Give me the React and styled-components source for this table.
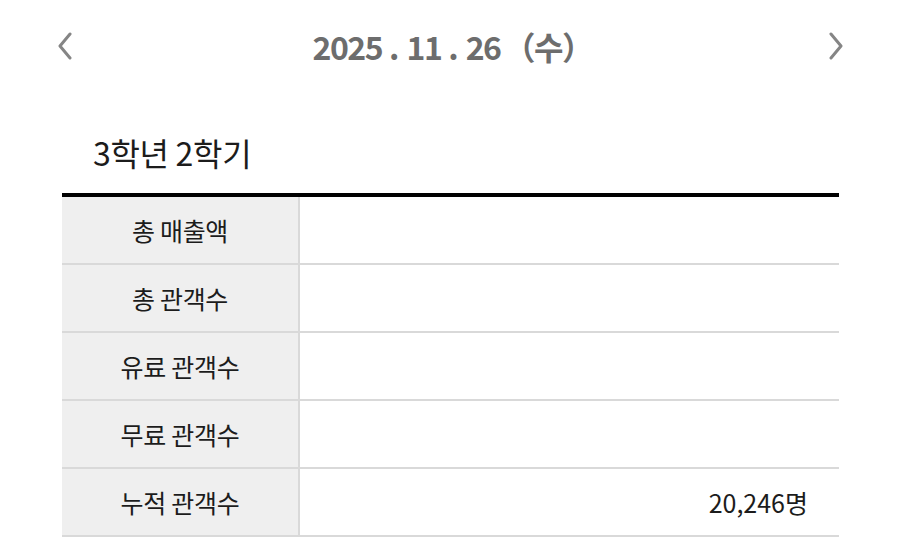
import React from 'react';
import styled, { createGlobalStyle } from 'styled-components';

const GlobalStyle = createGlobalStyle`
  body {
    margin: 0;
    background: #fff;
    font-family: "Noto Sans CJK KR", "Noto Sans", sans-serif;
  }
`;

const Page = styled.div`
  width: 900px;
  height: 544px;
  overflow: hidden;
`;

const DateBar = styled.div`
  display: flex;
  align-items: center;
  justify-content: space-between;
  height: 92px;
  padding: 0 54px 0 55px;
  box-sizing: border-box;
`;

const Arrow = styled.button`
  display: flex;
  align-items: center;
  justify-content: center;
  width: 20px;
  height: 30px;
  padding: 0;
  border: 0;
  background: none;
  color: #858585;
`;

const DateText = styled.h2`
  display: flex;
  align-items: center;
  gap: 7px;
  margin: 0;
  font-size: 32px;
  font-weight: 700;
  letter-spacing: -1.5px;
  color: #6d6d6d;
  padding-left: 4px;
`;

const Dot = styled.span`
  letter-spacing: 0;
`;

const Day = styled.span`
  margin-left: -4px;
`;

const Title = styled.h3`
  margin: 0;
  padding: 39px 0 20px 93px;
  line-height: 42px;
  font-size: 32px;
  font-weight: 400;
  letter-spacing: -0.3px;
  color: #1c1c1c;
`;

const Table = styled.div`
  margin: 0 61px 0 62px;
  border-top: 4px solid #000;
`;

const Row = styled.div`
  display: grid;
  grid-template-columns: 238px 1fr;
  height: 68px;
  border-bottom: 2px solid #d9d9d9;
  box-sizing: border-box;
`;

const Label = styled.div`
  display: flex;
  align-items: center;
  justify-content: center;
  background: #efefef;
  border-right: 2px solid #d9d9d9;
  font-size: 25px;
  letter-spacing: -0.3px;
  color: #1c1c1c;
`;

const Value = styled.div`
  display: flex;
  align-items: center;
  justify-content: flex-end;
  padding-right: 31px;
  font-size: 25px;
  letter-spacing: 0;
  color: #1c1c1c;
`;

const Chevron = ({ dir }) => (
  <svg width="18" height="28" viewBox="0 0 18 28" fill="none">
    <path
      d={dir === 'left' ? 'M14 2 L4 14 L14 26' : 'M4 2 L14 14 L4 26'}
      stroke="currentColor"
      strokeWidth="3"
      strokeLinecap="round"
      strokeLinejoin="round"
    />
  </svg>
);

const rows = [
  { label: '총 매출액', value: '' },
  { label: '총 관객수', value: '' },
  { label: '유료 관객수', value: '' },
  { label: '무료 관객수', value: '' },
  { label: '누적 관객수', value: '20,246명' },
];

export default function App() {
  return (
    <Page>
      <GlobalStyle />
      <DateBar>
        <Arrow aria-label="이전"><Chevron dir="left" /></Arrow>
        <DateText>
          <span>2025</span><Dot>.</Dot><span>11</span><Dot>.</Dot><span>26</span>
          <Day>（수）</Day>
        </DateText>
        <Arrow aria-label="다음"><Chevron dir="right" /></Arrow>
      </DateBar>
      <Title>3학년 2학기</Title>
      <Table>
        {rows.map((r) => (
          <Row key={r.label}>
            <Label>{r.label}</Label>
            <Value>{r.value}</Value>
          </Row>
        ))}
      </Table>
    </Page>
  );
}
